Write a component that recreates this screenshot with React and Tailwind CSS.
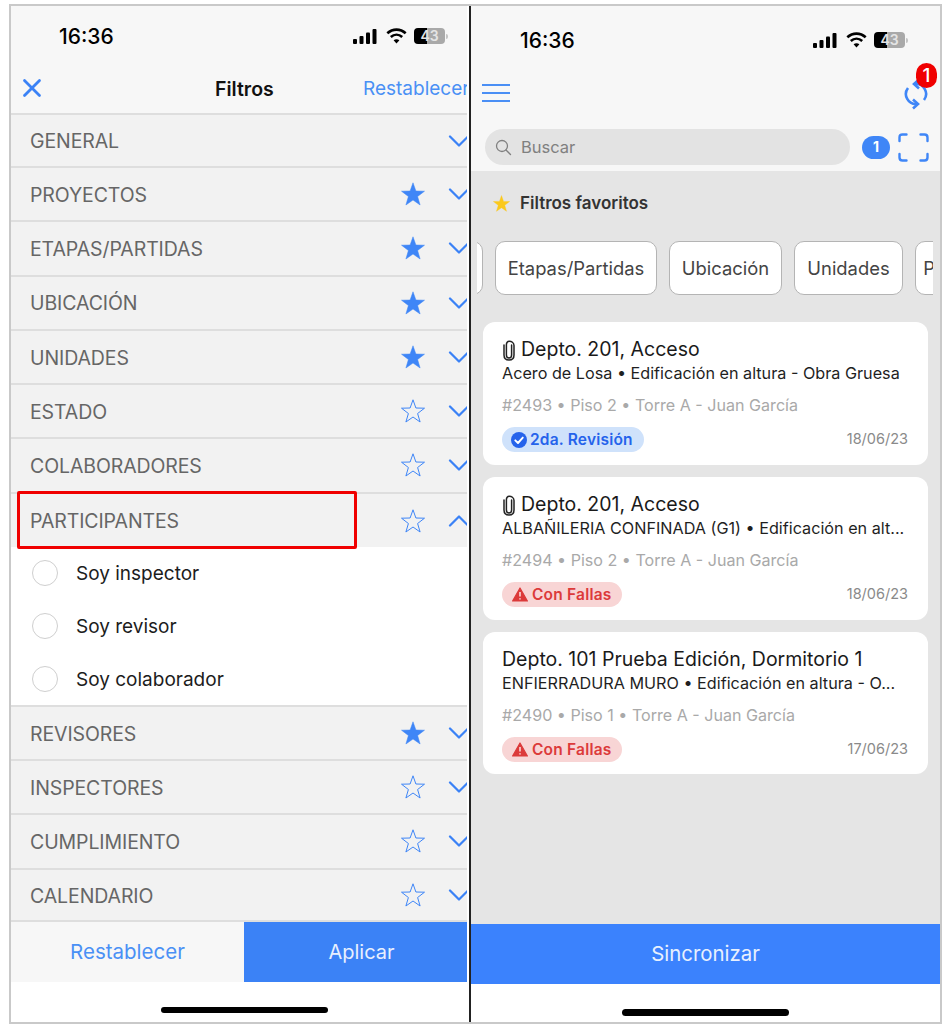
import React from "react";
import { X, ChevronDown, ChevronUp } from "lucide-react";

const font = { fontFamily: "Inter, 'Liberation Sans', sans-serif" };

function Star({ filled, className }) {
  return (
    <svg viewBox="0 0 24 24" className={className} fill={filled ? "currentColor" : "none"} stroke="currentColor" strokeWidth={filled ? 0.5 : 1} strokeLinejoin="miter">
      <polygon points="12,0.8 14.9,9 23.5,9.2 16.6,14.5 19.1,23 12,18 4.9,23 7.4,14.5 0.5,9.2 9.1,9" />
    </svg>
  );
}

function StatusBar({ timeMl, iconsMl }) {
  return (
    <div className="flex items-center h-[30px] text-black">
      <span className={`${timeMl} w-[56px] text-[21px] leading-none font-medium tracking-[0px]`}>16:36</span>
      <div className={`${iconsMl} flex items-center`}>
        <svg width="24" height="15" viewBox="0 0 24 15" fill="#000">
          <rect x="0" y="10" width="4" height="5" rx="1" />
          <rect x="6.5" y="7" width="4" height="8" rx="1" />
          <rect x="13" y="3.5" width="4" height="11.5" rx="1" />
          <rect x="19.5" y="0" width="4" height="15" rx="1" />
        </svg>
        <svg width="21" height="16" viewBox="0 0 21 16" fill="none" stroke="#000" strokeWidth="2.6" className="ml-[9px]">
          <path d="M1.3 5.3C6.7 0.4 14.3 0.4 19.7 5.3" />
          <path d="M4.8 9C8.2 6 12.8 6 16.2 9" />
          <path d="M10.5 15.5L7.6 12.3C9.3 11 11.7 11 13.4 12.3Z" fill="#000" stroke="none" />
        </svg>
        <span className="ml-[7px] w-[31px] h-[16px] rounded-[4px] bg-[linear-gradient(90deg,#000_42%,#a9a9a9_42%)] flex items-center justify-center text-[14px] leading-none font-semibold text-[#e4e4e4]">43</span>
        <span className="ml-[1px] w-[1.5px] h-[5px] bg-[#c4c4c4] rounded-r-sm" />
      </div>
    </div>
  );
}

function Row({ label, star, up, first, last }) {
  const height = first ? "h-[53px]" : last ? "h-[52.5px]" : "h-[54.25px]";
  return (
    <div className={`${height} shrink-0 flex items-center bg-[#f2f2f2] ${up ? "" : "border-b-2 border-[#dedede]"} pl-[19px] overflow-hidden`}>
      <span className="flex-1 pt-[3px] text-[#666] text-[19.5px] leading-none tracking-[-0.1px]">{label}</span>
      {star !== undefined && (
        <Star filled={star} className="w-[24px] h-[24px] text-[#3f86f7]" />
      )}
      <span className="ml-[23px] mr-[-3px] w-[22px] flex justify-center text-[#3b82f6]">
        {up ? (
          <ChevronUp size={36} strokeWidth={1.5} className="shrink-0" />
        ) : (
          <ChevronDown size={36} strokeWidth={1.5} className="shrink-0" />
        )}
      </span>
    </div>
  );
}

function Radio({ label }) {
  return (
    <div className="h-[53px] flex items-center pl-[21px]">
      <span className="w-[26px] h-[26px] rounded-full border border-[#cfcfcf] bg-white" />
      <span className="ml-[18px] text-[19px] leading-none text-[#1c1c1c]">{label}</span>
    </div>
  );
}

function Clip() {
  return (
    <svg width="14" height="21" viewBox="0 0 14 21" fill="none" stroke="#222" strokeWidth="1.5" strokeLinecap="round" className="shrink-0">
      <path d="M9.6 5V15C9.6 16.8 8.6 18 7 18C5.4 18 4.4 16.8 4.4 15V4.8C4.4 2.8 5.5 1.2 7.2 1.2C9.4 1.2 12 2.6 12 5.5V15C12 18 10 20 7 20C4 20 2 18 2 15V5" />
    </svg>
  );
}

function Pill({ kind }) {
  if (kind === "ok") {
    return (
      <span className="h-[25px] w-[142px] rounded-full bg-[#cfe2fb] flex items-center pl-[9px] text-[#2563eb] text-[15.5px] tracking-[0.2px] font-semibold leading-none whitespace-nowrap">
        <svg width="16" height="16" viewBox="0 0 16 16" className="mr-[3px] shrink-0">
          <circle cx="8" cy="8" r="8" fill="#2563eb" />
          <path d="M4.3 8.3L7 11L11.8 5.6" stroke="#fff" strokeWidth="1.9" fill="none" strokeLinecap="round" strokeLinejoin="round" />
        </svg>
        2da. Revisión
      </span>
    );
  }
  return (
    <span className="h-[25px] w-[120px] rounded-full bg-[#f8d5d5] flex items-center pl-[10px] text-[#dc3a3a] text-[15.5px] tracking-[0.2px] font-semibold leading-none whitespace-nowrap">
      <svg width="16" height="15" viewBox="0 0 16 15" className="mr-[4px] shrink-0">
        <path d="M8 1L15.4 14H0.6Z" fill="#dc3a3a" stroke="#dc3a3a" strokeWidth="1.2" strokeLinejoin="round" />
        <path d="M8 5V9.6M8 11.2V12.4" stroke="#fbe1e1" strokeWidth="1.5" />
      </svg>
      Con Fallas
    </span>
  );
}

function Card({ clip, title, sub, meta, kind, date, h }) {
  return (
    <div className={`${h} bg-white rounded-[12px] pl-[19px] pr-[20px] pt-[16px]`}>
      <div className="flex items-center h-[24px] gap-[5px] text-[19.5px] leading-none text-[#1a1a1a]">
        {clip && <Clip />}
        <span>{title}</span>
      </div>
      <div className="mt-[1px] h-[20px] flex items-center text-[16.2px] leading-none text-[#1f1f1f] whitespace-nowrap">{sub}</div>
      <div className="mt-[12px] h-[20px] flex items-center text-[16.1px] leading-none text-[#a9a9a9] whitespace-nowrap">{meta}</div>
      <div className="mt-[12px] flex items-center justify-between">
        <Pill kind={kind} />
        <span className="text-[14.5px] leading-none text-[#8a8a8a]">{date}</span>
      </div>
    </div>
  );
}

function Chip({ children, w }) {
  return (
    <div className={`${w} shrink-0 h-[54px] rounded-[10px] border border-[#b4b4b4] bg-white flex items-center justify-center text-[18.4px] leading-none text-[#444] whitespace-nowrap`}>
      {children}
    </div>
  );
}

export default function App() {
  return (
    <div style={font} className="w-[947px] h-[1029px] bg-white pl-[9px] pt-[4px] overflow-hidden">
      <div className="w-[933px] h-[1020px] border-2 border-[#c9c9c9] flex bg-white relative">
        {/* Left phone */}
        <div className="w-[456px] shrink-0 h-full flex flex-col overflow-hidden">
          <div className="bg-[#f7f7f7] h-[109px] shrink-0 border-b-2 border-[#dedede]">
            <div className="pt-[15px]">
              <StatusBar timeMl="ml-[48px]" iconsMl="ml-[238px]" />
            </div>
            <div className="mt-[20px] h-[34px] flex items-center relative">
              <X size={30} strokeWidth={2.2} className="ml-[6px] text-[#3b82f6]" />
              <span className="absolute left-[204px] top-[9px] text-[19.5px] font-semibold leading-none text-[#111]">Filtros</span>
              <span className="absolute left-[352px] top-[8px] text-[19px] leading-none text-[#4a90f5] whitespace-nowrap">Restablecer</span>
            </div>
          </div>
          <Row label="GENERAL" first />
          <Row label="PROYECTOS" star={true} />
          <Row label="ETAPAS/PARTIDAS" star={true} />
          <Row label="UBICACIÓN" star={true} />
          <Row label="UNIDADES" star={true} />
          <Row label="ESTADO" star={false} />
          <Row label="COLABORADORES" star={false} />
          <Row label="PARTICIPANTES" star={false} up />
          <div className="h-[160px] mt-[-1px] shrink-0 bg-white border-b-2 border-[#dedede]">
            <Radio label="Soy inspector" />
            <Radio label="Soy revisor" />
            <Radio label="Soy colaborador" />
          </div>
          <Row label="REVISORES" star={true} />
          <Row label="INSPECTORES" star={false} />
          <Row label="CUMPLIMIENTO" star={false} />
          <Row label="CALENDARIO" star={false} last />
          <div className="h-[60px] shrink-0 flex">
            <div className="w-[233px] bg-[#f7f7f7] flex items-center justify-center text-[20.5px] leading-none text-[#4a90f5]">Restablecer</div>
            <div className="flex-1 pl-[12px] bg-[#3b82f6] flex items-center justify-center text-[20px] leading-none text-[#e8f0fe]">Aplicar</div>
          </div>
          <div className="flex-1 bg-white flex justify-center pl-[11px] pt-[25px]">
            <span className="w-[167px] h-[6px] rounded-full bg-black" />
          </div>
        </div>

        {/* Divider */}
        <div className="w-[2px] ml-[2px] shrink-0 bg-[#222]" />

        {/* Right phone */}
        <div className="flex-1 min-w-0 h-full flex flex-col">
          <div className="bg-[#f7f7f7] h-[165px] shrink-0">
            <div className="pt-[19px]">
              <StatusBar timeMl="ml-[49px]" iconsMl="ml-[237px]" />
            </div>
            <div className="mt-[15px] h-[46px] flex items-center relative">
              <svg width="30" height="20" viewBox="0 0 30 20" fill="none" stroke="#4a8ff5" strokeWidth="2" className="ml-[10px]">
                <path d="M1 2H29M1 10H29M1 18H29" />
              </svg>
              <svg width="26" height="34" viewBox="0 0 26 34" fill="none" stroke="#3f86f7" strokeWidth="2.6" className="absolute left-[432px] top-[7px]">
                <path d="M5 11A10 10 0 0 0 14 27" />
                <path d="M10 22.500L15 27L10 31.500" />
                <path d="M21 23A10 10 0 0 0 12 7" />
                <path d="M16 2.500L11 7L16 11.500" />
              </svg>
              <span className="absolute left-[445px] top-[-7px] w-[21px] h-[25px] rounded-full bg-[#f00000] flex items-center justify-center text-white text-[19px] leading-none font-medium">1</span>
            </div>
            <div className="mt-[13px] h-[36px] flex items-center pl-[14px]">
              <div className="w-[365px] h-[36px] rounded-full bg-[#e3e3e3] flex items-center pl-[10px] text-[16.5px] leading-none text-[#808080]">
                <svg width="17" height="17" viewBox="0 0 17 17" fill="none" stroke="#808080" strokeWidth="1.3" strokeLinecap="round">
                  <circle cx="7" cy="7" r="5.5" />
                  <path d="M11 11L15.500 15.500" />
                </svg>
                <span className="ml-[9px]">Buscar</span>
              </div>
              <span className="ml-[12px] w-[28px] h-[23px] rounded-full bg-[#3f86f7] flex items-center justify-center text-white text-[14px] font-bold leading-none">1</span>
              <svg width="31" height="29" viewBox="0 0 31 29" fill="none" stroke="#3f86f7" strokeWidth="2.4" strokeLinecap="round" className="ml-[8px]">
                <path d="M8.500 1.500H4.500Q1.500 1.500 1.500 4.500V8M22.500 1.500H26.500Q29.500 1.500 29.500 4.500V8M1.500 21V24.500Q1.500 27.500 4.500 27.500H8.500M29.500 21V24.500Q29.500 27.500 26.500 27.500H22.500" />
              </svg>
            </div>
          </div>
          <div className="flex-1 bg-[#e5e5e5] flex flex-col min-h-0">
            <div className="mt-[23px] h-[18px] flex items-center pl-[22px]">
              <Star filled className="w-[17px] h-[17px] text-[#fbc91c]" />
              <span className="ml-[10px] text-[17px] font-semibold leading-none text-[#333]">Filtros favoritos</span>
            </div>
            <div className="mt-[29px] ml-[6px] w-[456px] flex gap-[12px] overflow-hidden">
              <Chip w="w-[100px] ml-[-94px]">{""}</Chip>
              <Chip w="w-[162px]">Etapas/Partidas</Chip>
              <Chip w="w-[113px]">Ubicación</Chip>
              <Chip w="w-[109px]">Unidades</Chip>
              <Chip w="w-[100px]"><span className="ml-[-72px]">P</span></Chip>
            </div>
            <div className="mt-[27px] mx-[12px] flex flex-col gap-[12px]">
              <Card clip title="Depto. 201, Acceso" sub="Acero de Losa • Edificación en altura - Obra Gruesa" meta="#2493 • Piso 2 • Torre A - Juan García" kind="ok" date="18/06/23" h="h-[143px]" />
              <Card clip title="Depto. 201, Acceso" sub="ALBAÑILERIA CONFINADA (G1) • Edificación en alt..." meta="#2494 • Piso 2 • Torre A - Juan García" kind="bad" date="18/06/23" h="h-[143px]" />
              <Card title="Depto. 101 Prueba Edición, Dormitorio 1" sub="ENFIERRADURA MURO • Edificación en altura - O..." meta="#2490 • Piso 1 • Torre A - Juan García" kind="bad" date="17/06/23" h="h-[142px]" />
            </div>
          </div>
          <div className="h-[60px] shrink-0 bg-[#3b82fd] flex items-center justify-center text-[20.4px] leading-none text-[#e8f0fe]">Sincronizar</div>
          <div className="h-[38px] shrink-0 bg-white flex justify-center pt-[25px]">
            <span className="w-[167px] h-[7px] rounded-full bg-black" />
          </div>
        </div>

        {/* Red highlight */}
        <div className="absolute left-[6px] top-[485px] w-[340px] h-[58px] border-[3.5px] border-[#f00000] rounded-[2px]" />
      </div>
    </div>
  );
}
